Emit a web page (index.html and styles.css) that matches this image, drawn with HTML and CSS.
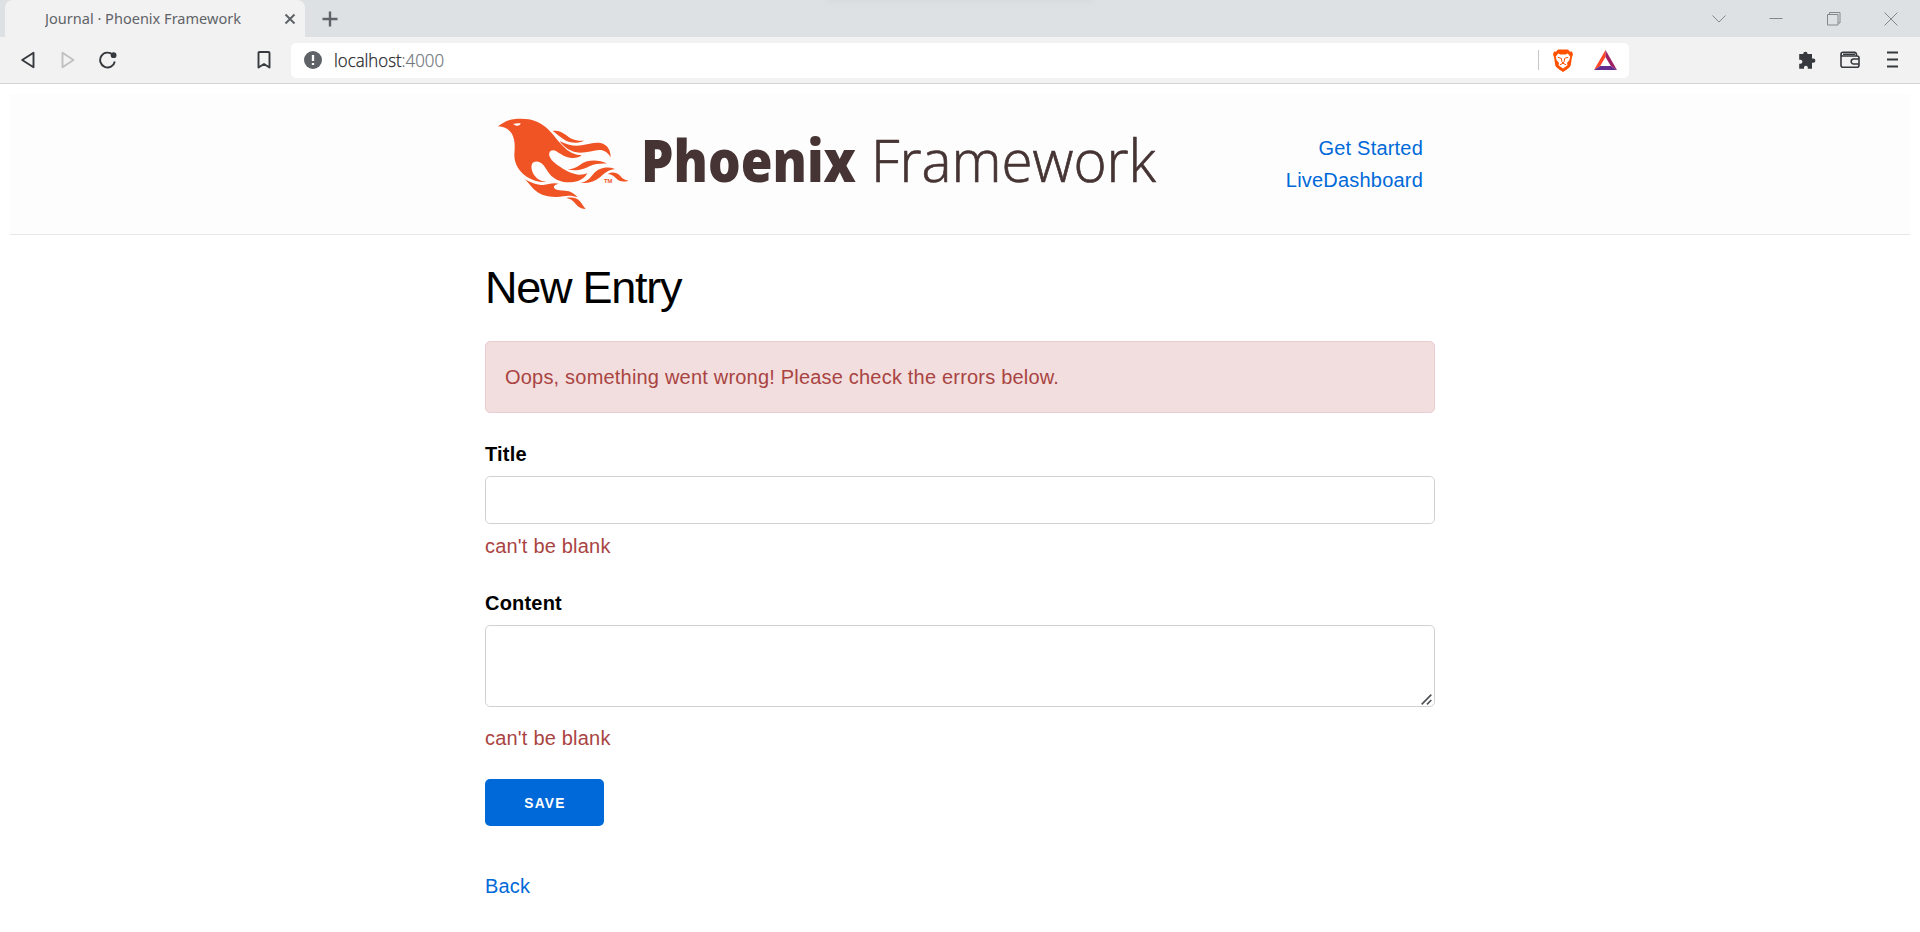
FILE: index.html
```html
<!DOCTYPE html>
<html lang="en">
<head>
<meta charset="utf-8">
<title>Journal · Phoenix Framework</title>
<link rel="stylesheet" href="styles.css">
</head>
<body>
<div class="tabstrip">
  <div class="tab">
    <svg class="tab-title" width="198" height="24"><text x="0" y="17" textLength="196" lengthAdjust="spacingAndGlyphs">Journal · Phoenix Framework</text></svg>
    <svg class="tab-close" width="12" height="12" viewBox="0 0 12 12"><path d="M1.500 1.500l9 9M10.500 1.500l-9 9"/></svg>
  </div>
  <svg class="new-tab" width="16" height="16" viewBox="0 0 16 16"><path d="M8 .5v15M.5 8h15"/></svg>
  <div class="window-controls">
    <svg width="14" height="14" viewBox="0 0 14 14"><path d="M.5 3.500l6.500 6.500 6.500-6.500"/></svg>
    <svg width="14" height="14" viewBox="0 0 14 14"><path d="M.5 6.500h13"/></svg>
    <svg width="14" height="14" viewBox="0 0 14 14"><path d="M.5 2.500h10.500v10.500H.5zM2.500 2.500v-2h10.500v10.500h-2"/></svg>
    <svg width="14" height="14" viewBox="0 0 14 14"><path d="M.5.500l13 13M13.500.500l-13 13"/></svg>
  </div>
  <div class="top-shadow"></div>
</div>
<div class="toolbar">
  <div class="nav-icons">
    <svg width="14" height="18" viewBox="0 0 14 18"><path d="M12.500 1.800v14.400L1.200 9z"/></svg>
    <svg class="disabled" width="14" height="18" viewBox="0 0 14 18"><path d="M1.500 1.800v14.400L12.500 9z"/></svg>
    <svg width="20" height="18" viewBox="0 0 20 18"><path d="M14.800 3.800A7.400 7.400 0 1 0 16.800 10.500"/><circle cx="15.600" cy="4.200" r="2.900" class="solid"/></svg>
  </div>
  <svg class="bookmark" width="14" height="18" viewBox="0 0 14 18"><path d="M1.500 2q0-1 1-1h9q1 0 1 1v14.500L7 13 1.500 16.500z"/></svg>
  <div class="address">
    <svg width="18" height="18" viewBox="0 0 18 18"><circle cx="9" cy="9" r="9" fill="#5f6368"/><path d="M9 4v6M9 12v2" stroke="#fff" stroke-width="2.300"/></svg>
    <svg class="url" width="114" height="30"><text x="0" y="21.500" textLength="110" lengthAdjust="spacingAndGlyphs">localhost<tspan class="port">:4000</tspan></text></svg>
    <div class="address-end">
      <span class="divider"></span>
      <svg class="brave" width="20" height="23" viewBox="0 0 20 23"><path fill="#ff5000" d="M5 .5h10l2 2.300 2-.2 1 3-1 2.400-1.300 8.600Q17 19 10 23 3 19 2.300 16.600L1 8 0 5.600l1-3 2 .2z"/><path fill="#fff" d="M5.200 4.600l2.300.9h5l2.300-.9 2.400 2.900-.8 3.600-2.400 2.800.5 2.300L10 19.500l-4.500-3.300.5-2.300-2.400-2.800-.8-3.600z"/><path fill="none" stroke="#ff5000" stroke-width="1" d="M4.800 8.300l3.400 1M15.200 8.300l-3.400 1M8.300 9.300l.6 3.400L10 14l1.100-1.300.6-3.400M6.800 15.800l3.200-1.500 3.200 1.500"/></svg>
      <svg width="23" height="20" viewBox="0 0 23 20"><path fill="#ff4724" d="M11.500 0L0 20l6.200-4 5.300-9z"/><path fill="#9e1f63" d="M11.500 0L23 20l-6.200-4-5.300-9z"/><path fill="#662d91" d="M0 20h23l-6.200-4H6.200z"/></svg>
    </div>
  </div>
  <div class="extensions">
    <svg width="18" height="18" viewBox="0 0 18 18"><path class="solid" d="M1.500 3H5.200A2.200 2.200 0 1 1 9.600 3H14v4.600h1.300a2.100 2.100 0 1 1 0 4.200H14v6H9.800v-1.200a1.900 1.900 0 0 0-3.800 0v1.200H1.200v-5h1.200a2 2 0 0 0 0-4H1.200V3z"/></svg>
    <svg class="wallet" width="20" height="18" viewBox="0 0 20 18"><path d="M1 3.200v11q0 2 2 2h14q2 0 2-2V7q0-2-2-2H2.800Q1 5 1 3.200q0-2 2-2h11.500q2 0 2.200 3.600M19 8h-5.300a2.500 2.500 0 0 0 0 5H19M3 3.200h12"/></svg>
    <svg width="11" height="18" viewBox="0 0 11 18"><path d="M0 1.500h11M0 8.500h11M0 15.500h11"/></svg>
  </div>
</div>
<header class="site-header">
  <div class="container header-row">
    <svg class="logo" width="675" height="115" viewBox="485 105 675 115" role="img">
      <g transform="translate(480 100) scale(.33333)" fill="#f15424">
        <path d="M54 79C66 69 82 60 100 58c25-3 50-1 65 5 25 9 43 27 57 44 10 13 20 25 33 37 15 14 30 21 50 22-8 7-22 9-35 7-20-3-30-13-42-20-13-6-23 2-20 14 4 13 17 23 30 32 17 13 37 23 58 25 10 1 20-2 26-5-7 16-27 27-50 28-27 1-44-7-58-19-11-12-16-23-24-33-10-12-30-15-35 0-3 17 7 33 20 43 7 5 15 7 24 7-14 4-39-3-59-15-25-17-37-40-37-65 1-20 3-35-3-53-5-17-20-32-46-33z"/>
        <path d="M218 93c14-3 30 4 40 12 12 10 27 19 54 17-12 6-27 8-40 5-22-5-36-22-54-34z"/>
        <path d="M239 123c21 12 46 17 66 13 20-4 40-10 57-7 20 5 30 21 30 43-6-12-16-19-28-22-19-2-39 8-64 8-25-1-48-15-61-35z"/>
        <path d="M263 207c22 1 32-10 47-19 20-10 50-8 72 3-22-1-37 1-52 7-20 11-45 17-67 9z"/>
        <path d="M301 249c19-4 29-14 39-27 15-18 40-24 65-15-20 3-30 11-43 23-17 15-37 21-61 19z"/>
        <path d="M384 222c11-7 26-5 34 3 8 9 14 15 28 17-16 5-28 3-38-7-6-7-13-12-24-13z"/>
        <path d="M133 237c17 10 37 18 57 18 15-2 30-8 48-3-10 0-18 5-16 11 4 7 18 8 33 9 17 1 28 8 38 20-13-5-28-6-43-3-25 4-55 1-75-11-20-12-25-28-42-41z"/>
        <path d="M259 294c16-3 31-1 41 10 7 8 10 16 17 23-17-1-25-9-33-19-7-8-14-12-25-14z"/>
        <path fill="#fff" d="M99 72c7-2 15-3 23-2 0 6-10 10-16 6z"/>
        <text class="trademark" x="372" y="250" textLength="25" lengthAdjust="spacingAndGlyphs">TM</text>
      </g>
      <text class="word-bold" x="641" y="182" textLength="215" lengthAdjust="spacingAndGlyphs">Phoenix</text>
      <text class="word-light" x="871" y="182" textLength="285" lengthAdjust="spacingAndGlyphs">Framework</text>
    </svg>
    <nav class="links"><a>Get Started</a><a>LiveDashboard</a></nav>
  </div>
</header>
<main class="container">
  <h1>New Entry</h1>
  <form>
    <div class="alert">Oops, something went wrong! Please check the errors below.</div>
    <label for="title">Title</label>
    <input id="title" type="text">
    <span class="error">can't be blank</span>
    <label for="content">Content</label>
    <div class="textarea-wrap">
      <textarea id="content"></textarea>
      <svg class="grip" width="11" height="11" viewBox="0 0 11 11"><path d="M.7 10.300L10.300.7M6 10.300L10.300 6"/></svg>
    </div>
    <span class="error late">can't be blank</span>
    <button type="button">Save</button>
  </form>
  <a class="back">Back</a>
</main>
</body>
</html>
```
FILE: styles.css
```css
* { box-sizing: border-box; }
body { margin: 0; height: 932px; overflow: hidden; background: #fff; color: #000; font: 20px/32px "Liberation Sans", Arial, sans-serif; letter-spacing: .2px; }
svg { display: block; flex: none; }
a { color: #0069d9; text-decoration: none; }

.tabstrip { position: relative; display: flex; align-items: center; height: 37px; padding-left: 5px; overflow: hidden; background: #dee1e4; }
.tab { display: flex; align-items: center; width: 300px; height: 37px; padding: 0 9px 0 40px; background: #f2f2f2; border-radius: 8px 8px 0 0; }
.tab-title { font: 14px "Noto Sans", sans-serif; letter-spacing: 0; fill: #5f6368; }
.tab-close { margin-left: auto; stroke: #5f6368; stroke-width: 2; }
.new-tab { margin-left: 17px; stroke: #5f6368; stroke-width: 2.4; }
.window-controls { display: flex; gap: 43.500px; margin-left: auto; padding-right: 22px; fill: none; stroke: #85888b; stroke-width: 1; }
.top-shadow { position: absolute; top: -10px; left: 825px; width: 270px; height: 9px; box-shadow: 0 0 10px rgba(0, 0, 0, .06); }

.toolbar { display: flex; align-items: center; height: 47px; border-bottom: 1px solid #d4d5d6; background: #f2f2f2; fill: none; stroke: #36393d; stroke-width: 1.900; stroke-linejoin: round; }
.solid { fill: #36393d; stroke: none; }
.nav-icons { display: flex; gap: 26px; padding-left: 21px; }
.nav-icons .disabled { stroke: #bfc0c1; }
.nav-icons svg:last-child { margin-left: -3px; }
.bookmark { margin-left: 139px; }
.address { display: flex; align-items: center; width: 1338px; height: 35px; margin-left: 20px; padding: 0 12px 0 13px; background: #fff; border-radius: 5px; stroke: none; }
.url { margin-left: 12px; font: 18px "Open Sans", sans-serif; font-weight: 300; letter-spacing: 0; fill: #202124; stroke: #202124; stroke-width: .25px; }
.port { fill: #70757a; stroke: #70757a; }
.address-end { display: flex; align-items: center; margin-left: auto; }
.divider { width: 1px; height: 20px; background: #c3c5c8; }
.brave { margin: 0 21px 0 14px; }
.extensions { display: flex; gap: 24px; margin-left: auto; padding-right: 22px; }
.extensions svg:last-child { margin-left: 3px; }
.wallet { stroke-width: 1.6; }

.site-header { height: 141px; margin: 10px 10px 0; border-bottom: 1px solid #e7e7e7; background: #fdfdfd; }
.container { width: 950px; margin: 0 auto; }
.header-row { display: flex; justify-content: space-between; padding-right: 12px; }
.logo { margin-top: 11px; overflow: visible; }
.links { display: flex; flex-direction: column; margin-top: 38px; text-align: right; }
.trademark { font: bold 15px "Liberation Sans", sans-serif; letter-spacing: 0; }
.word-bold { font: 800 59px "Open Sans", sans-serif; letter-spacing: 0; fill: #463434; }
.word-light { font: 300 59px "Open Sans", sans-serif; letter-spacing: 0; fill: #463434; stroke: #463434; stroke-width: .7px; }

h1 { margin: 26px 0; font-size: 45px; font-weight: 400; line-height: 54px; letter-spacing: -1.250px; }
.alert { height: 72px; padding: 19px; border: 1px solid #ebccd1; border-radius: 5px; background: #f2dede; color: #a94442; }
label { display: block; margin: 25px 0 6px; font-weight: 700; }
input, textarea { display: block; width: 950px; margin: 0; padding: 7px 12px; border: 1px solid #d1d1d1; border-radius: 5px; background: transparent; font: inherit; }
input { height: 48px; }
textarea { height: 82px; resize: none; }
.textarea-wrap { position: relative; }
.grip { position: absolute; right: 3px; bottom: 2px; fill: none; stroke: #505357; stroke-width: 1.700; }
.error { display: block; margin-top: 6px; color: #a94442; }
.error.late { margin-top: 15px; }
button { display: block; width: 119px; height: 47px; margin-top: 25px; padding: 2px 0 0 1px; border: 0; border-radius: 5px; background: #0069d9; color: #fff; font: 700 13.750px "Liberation Sans", Arial, sans-serif; letter-spacing: 1.250px; text-transform: uppercase; }
.back { display: block; margin-top: 44px; }
```
